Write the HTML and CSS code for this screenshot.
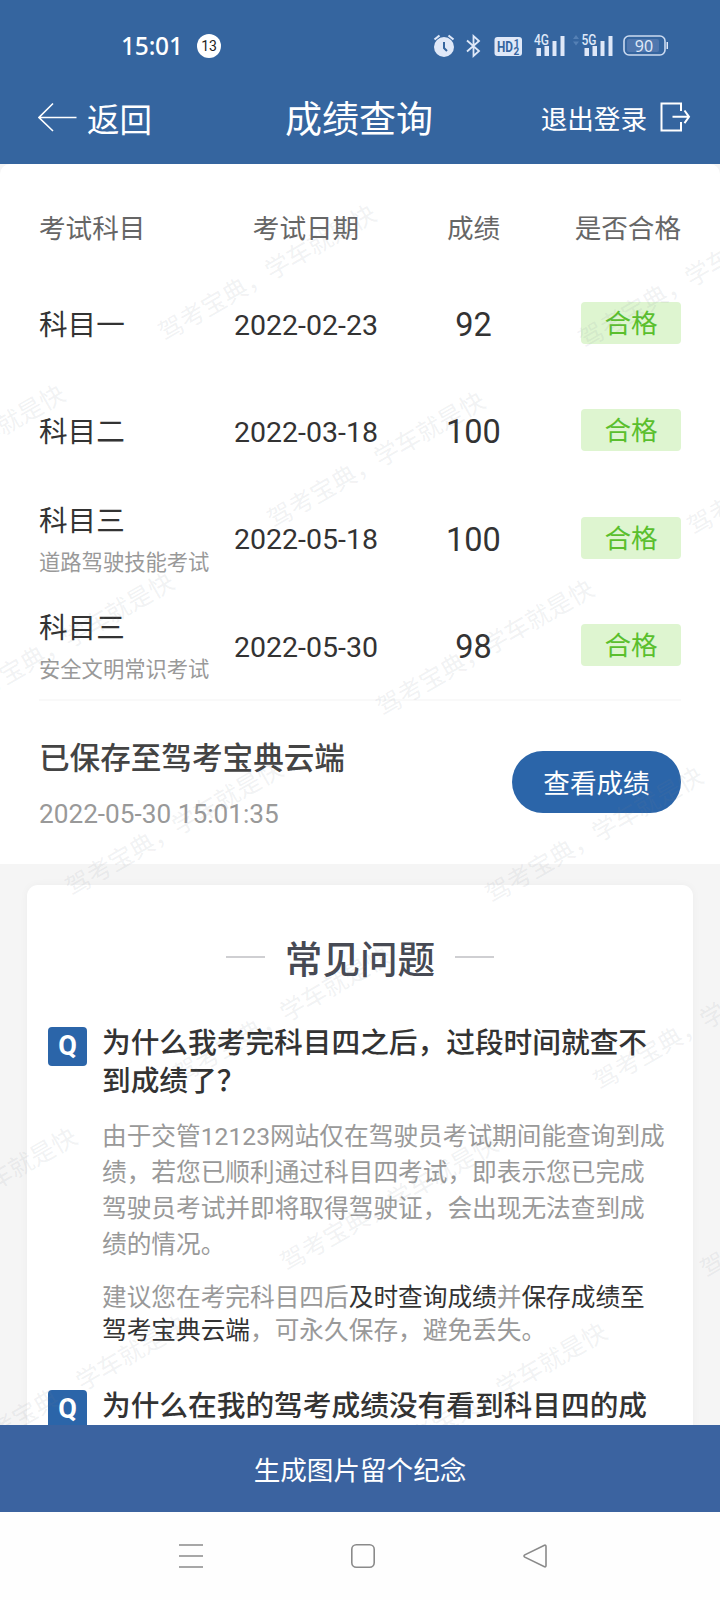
FILE: index.html
```html
<!DOCTYPE html>
<html lang="zh-CN">
<head>
  <meta charset="UTF-8">
  <meta name="viewport" content="width=device-width, initial-scale=1.0">
  <title>成绩查询</title>
  <link rel="stylesheet" href="styles.css">
</head>
<body>
  <header class="header">
    <div class="status-bar">
      <span class="clock">15:01</span>
      <span class="count">13</span>
      <svg class="status-icons" width="240" height="28" viewBox="430 32 240 28" fill="#dfe8f8">
        <!-- alarm -->
        <circle cx="444" cy="47" r="10"/>
        <path d="M434.500 39.500l5-4M453.500 39.500l-5-4" stroke="#dfe8f8" stroke-width="2.200" fill="none"/>
        <path d="M444 42v6l3 3" stroke="#35659f" stroke-width="2" fill="none"/>
        <!-- bluetooth -->
        <path d="M467 40.500l12 10.500-5.500 5V36l5.500 5-12 10.500" stroke="#dfe8f8" stroke-width="1.800" fill="none"/>
        <!-- HD -->
        <rect x="494.500" y="37" width="27.500" height="19" rx="3"/>
        <text class="hd-text" x="497" y="52" textLength="16" lengthAdjust="spacingAndGlyphs">HD</text>
        <text class="hd-num" x="513.800" y="46.500">1</text>
        <text class="hd-num" x="513.500" y="54.500">2</text>
        <!-- signals -->
        <text class="net-text" x="534" y="45" textLength="15" lengthAdjust="spacingAndGlyphs">4G</text>
        <path d="M536.500 48h4.500v8h-4.500zM544.500 46h4.500v10h-4.500zM552.500 41h4v15h-4zM560.500 36h4v20h-4z"/>
        <path d="M573 39l3-4 3 4zM573 41.500l3 4 3-4z" fill="#5580b5"/>
        <text class="net-text" x="581.500" y="45" textLength="15" lengthAdjust="spacingAndGlyphs">5G</text>
        <path d="M584.500 48h4.500v8h-4.500zM592.500 46h4.500v10h-4.500zM600.500 41h4v15h-4zM608.500 36h4v20h-4z"/>
        <!-- battery -->
        <rect x="624" y="36" width="41" height="19" rx="5" fill="none" stroke="#cbdaf0" stroke-width="1.600"/>
        <rect x="627" y="39" width="32" height="13" rx="2" fill="#5077ae"/>
        <path d="M666.500 42h1.500v7h-1.500z"/>
        <text class="battery-text" x="644" y="51.500" text-anchor="middle">90</text>
      </svg>
    </div>
    <nav class="nav-bar">
      <div class="back">
        <svg width="39" height="30" viewBox="0 0 39 30" fill="none" stroke="#fff" stroke-width="1.600">
          <path d="M15 1.500L1 15.500l14 13.500M1 15.500h37.500"/>
        </svg>
        <span>返回</span>
      </div>
      <h1>成绩查询</h1>
      <div class="logout">
        <span>退出登录</span>
        <svg width="31" height="30" viewBox="0 0 31 30" fill="none" stroke="#fff" stroke-width="2">
          <path d="M21 9V1.500H1.500v27H21V20M12.500 14.800H29M24.500 8.500l4.500 6.300-4.500 6.300"/>
        </svg>
      </div>
    </nav>
  </header>

  <main class="content">
    <section class="scores">
      <div class="row row-head">
        <span>考试科目</span><span>考试日期</span><span>成绩</span><span class="last">是否合格</span>
      </div>
      <div class="row">
        <div class="subject">科目一</div>
        <span class="date">2022-02-23</span>
        <span class="score">92</span>
        <span class="badge">合格</span>
      </div>
      <div class="row">
        <div class="subject">科目二</div>
        <span class="date">2022-03-18</span>
        <span class="score">100</span>
        <span class="badge">合格</span>
      </div>
      <div class="row">
        <div class="subject double">科目三<small>道路驾驶技能考试</small></div>
        <span class="date">2022-05-18</span>
        <span class="score">100</span>
        <span class="badge">合格</span>
      </div>
      <div class="row">
        <div class="subject double">科目三<small>安全文明常识考试</small></div>
        <span class="date">2022-05-30</span>
        <span class="score">98</span>
        <span class="badge">合格</span>
      </div>
      <div class="saved">
        <div>
          <p class="saved-title">已保存至驾考宝典云端</p>
          <p class="saved-time">2022-05-30 15:01:35</p>
        </div>
        <button class="view-btn">查看成绩</button>
      </div>
    </section>

    <section class="faq">
      <h2>常见问题</h2>
      <div class="faq-item">
        <span class="q">Q</span>
        <div class="faq-text">
          <h3>为什么我考完科目四之后，过段时间就查不到成绩了？</h3>
          <p class="answer">由于交管12123网站仅在驾驶员考试期间能查询到成绩，若您已顺利通过科目四考试，即表示您已完成驾驶员考试并即将取得驾驶证，会出现无法查到成绩的情况。</p>
          <p class="tip">建议您在考完科目四后<b>及时查询成绩</b>并<b>保存成绩至驾考宝典云端</b>，可永久保存，避免丢失。</p>
        </div>
      </div>
      <div class="faq-item">
        <span class="q">Q</span>
        <div class="faq-text">
          <h3>为什么在我的驾考成绩没有看到科目四的成</h3>
        </div>
      </div>
    </section>

    <svg class="watermark" width="720" height="1261" viewBox="0 164 720 1261">
      <defs>
        <text id="mark" x="-12.200" y="9" transform="rotate(-30)">驾考宝典，学车就是快</text>
      </defs>
      <use href="#mark" x="171" y="328"/>
      <use href="#mark" x="591" y="335"/>
      <use href="#mark" x="-140" y="508"/>
      <use href="#mark" x="280" y="515"/>
      <use href="#mark" x="700" y="522"/>
      <use href="#mark" x="-31" y="696"/>
      <use href="#mark" x="389" y="703"/>
      <use href="#mark" x="78" y="883"/>
      <use href="#mark" x="498" y="890"/>
      <use href="#mark" x="186" y="1070"/>
      <use href="#mark" x="606" y="1077"/>
      <use href="#mark" x="-128" y="1251"/>
      <use href="#mark" x="293" y="1258"/>
      <use href="#mark" x="713" y="1265"/>
      <use href="#mark" x="-18" y="1439"/>
      <use href="#mark" x="402" y="1446"/>
    </svg>
  </main>

  <button class="share-btn">生成图片留个纪念</button>

  <footer class="system-nav">
    <svg width="26" height="26" viewBox="0 0 26 26" fill="none" stroke="#8a8a8a" stroke-width="1.600">
      <path d="M1 2h24M1 13h24M1 24h24"/>
    </svg>
    <svg width="26" height="26" viewBox="0 0 26 26" fill="none" stroke="#8a8a8a" stroke-width="1.600">
      <rect x="1.800" y="1.800" width="22.400" height="22.400" rx="4.500"/>
    </svg>
    <svg width="26" height="26" viewBox="0 0 26 26" fill="none" stroke="#8a8a8a" stroke-width="1.600">
      <path d="M22.500 2.200L2.800 11.900q-1.600 1.100 0 2.200L22.500 23.800q1.500.4 1.500-1.200V3.400q0-1.600-1.500-1.200z"/>
    </svg>
  </footer>
</body>
</html>
```

FILE: styles.css
```css
* {
  box-sizing: border-box;
}

body {
  margin: 0;
  width: 720px;
  height: 1600px;
  overflow: hidden;
  display: flex;
  flex-direction: column;
  background: #f5f5f5;
  color: #333333;
  font-family: Roboto, "Noto Sans CJK SC", sans-serif;
}

h1, h2, h3, p {
  margin: 0;
}

button {
  border: none;
  padding: 0;
  color: #ffffff;
  font-family: inherit;
  font-size: 26.600px;
}

/* Header */
.header {
  height: 164px;
  flex: none;
  background: #35659f;
  color: #ffffff;
}

.status-bar {
  height: 87px;
  padding: 4px 50px 0 121px;
  display: flex;
  align-items: center;
}

.clock {
  width: 76px;
  font-family: "Noto Sans", sans-serif;
  font-size: 24.500px;
  font-weight: 500;
  letter-spacing: -0.200px;
}

.count {
  width: 24px;
  height: 24px;
  border-radius: 50%;
  background: #ffffff;
  color: #222222;
  font-size: 14px;
  line-height: 24px;
  text-align: center;
}

.status-icons {
  margin-left: auto;
}

.hd-text {
  fill: #35659f;
  font-size: 15px;
  font-weight: 700;
}

.hd-num {
  fill: #35659f;
  font-size: 10px;
  font-weight: 700;
}

.net-text {
  font-size: 14px;
  font-weight: 500;
}

.battery-text {
  font-family: "Noto Sans", sans-serif;
  font-size: 16px;
}

.nav-bar {
  height: 60px;
  padding: 0 29px 0 38px;
  display: grid;
  grid-template-columns: 247px auto 1fr;
  align-items: center;
}

.back {
  display: flex;
  align-items: center;
  gap: 10px;
  font-size: 32.500px;
}

.nav-bar h1 {
  font-size: 37px;
  font-weight: 400;
}

.logout {
  display: flex;
  align-items: center;
  justify-content: flex-end;
  gap: 13px;
  font-size: 26.600px;
}

/* Scores */
.content {
  position: relative;
  height: 1261px;
  flex: none;
  overflow: hidden;
}

.scores {
  height: 700px;
  padding: 31px 39px 0;
  border-radius: 10px 10px 0 0;
  background: #ffffff;
}

.row {
  height: 107.300px;
  display: grid;
  grid-template-columns: 195px 144px 191px 1fr;
  align-items: center;
  text-align: center;
}

.row-head {
  height: 76px;
  padding-bottom: 14px;
  color: #666666;
  font-size: 26.600px;
}

.row-head span:first-child,
.subject {
  text-align: left;
}

.row-head .last {
  text-align: right;
}

.subject {
  padding-top: 1px;
  font-size: 28.600px;
  line-height: 42px;
}

.subject.double {
  padding-top: 5px;
}

.subject small {
  display: block;
  color: #999999;
  font-size: 21.300px;
}

.date {
  padding-top: 1px;
  font-size: 28.500px;
  white-space: nowrap;
}

.score {
  padding-top: 1px;
  font-size: 32.500px;
}

.badge {
  justify-self: end;
  width: 100px;
  height: 42px;
  margin-bottom: 3px;
  border-radius: 4px;
  background: #def5d0;
  color: #5abf2d;
  font-size: 26.600px;
  line-height: 44px;
}

.saved {
  height: 160px;
  margin-top: -1px;
  border-top: 2px solid #f9f9f9;
  display: flex;
  justify-content: space-between;
  align-items: center;
}

.saved-title {
  margin-top: 10px;
  color: #444444;
  font-size: 30.600px;
  font-weight: 500;
  line-height: 46px;
}

.saved-time {
  margin-top: 12px;
  color: #999999;
  font-size: 26.200px;
  line-height: 40px;
}

.view-btn {
  width: 169px;
  height: 62px;
  margin-top: 3px;
  border-radius: 31px;
  background: #2b65a9;
}

/* FAQ */
.faq {
  height: 800px;
  margin: 21px 27px 0;
  padding: 44px 21px 0;
  border-radius: 11px;
  background: #ffffff;
  box-shadow: 0 0 8px rgba(0, 0, 0, 0.04);
}

.faq h2 {
  padding-top: 3px;
  display: flex;
  justify-content: center;
  align-items: center;
  gap: 20px;
  color: #474a54;
  font-size: 37.600px;
  font-weight: 500;
  line-height: 56px;
}

.faq h2::before,
.faq h2::after {
  content: "";
  width: 39px;
  height: 2px;
  margin-bottom: 6px;
  background: #cfcfd2;
}

.faq-item {
  margin-top: 36px;
  display: flex;
  gap: 15px;
}

.faq-item + .faq-item {
  margin-top: 40px;
}

.q {
  width: 39px;
  height: 39px;
  margin-top: 3px;
  flex: none;
  border-radius: 4px;
  background: #2b65a9;
  color: #ffffff;
  font-size: 27px;
  font-weight: 700;
  line-height: 39px;
  text-align: center;
}

.faq-text {
  width: 565px;
  flex: none;
}

.faq h3 {
  font-size: 28.700px;
  font-weight: 500;
  line-height: 38px;
}

.answer {
  margin-top: 19px;
  color: #999999;
  font-size: 24.680px;
  line-height: 36px;
}

.tip {
  margin-top: 18px;
  color: #999999;
  font-size: 24.680px;
  line-height: 33px;
}

.tip b {
  color: #333333;
  font-weight: 400;
}

/* Repeated slogan laid over the page */
.watermark {
  position: absolute;
  top: 0;
  left: 0;
  fill: rgba(120, 130, 145, 0.110);
  font-size: 24.600px;
  font-weight: 400;
  pointer-events: none;
}

/* Bottom */
.share-btn {
  height: 87px;
  flex: none;
  background: #3b63a0;
}

.system-nav {
  height: 88px;
  padding-left: 6px;
  background: #fefefe;
  display: flex;
  justify-content: center;
  align-items: center;
  gap: 146px;
}
```
